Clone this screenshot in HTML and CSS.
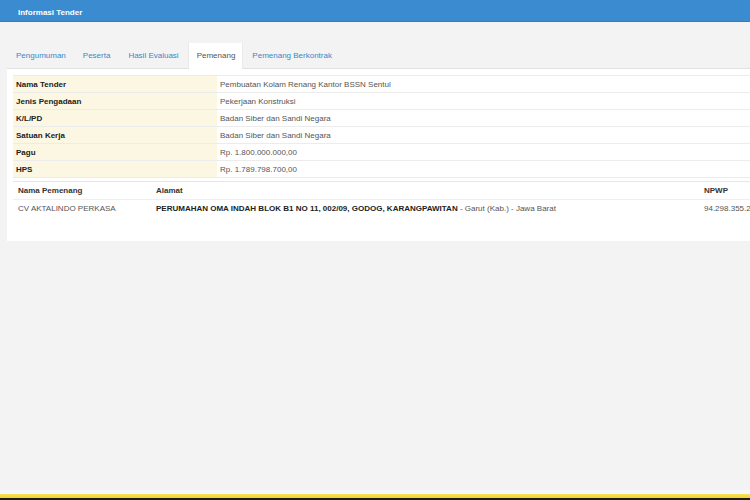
FILE: index.html
```html
<!DOCTYPE html>
<html lang="id">
<head>
<meta charset="utf-8">
<title>Informasi Tender</title>
<link rel="stylesheet" href="styles.css">
</head>
<body>
<div class="page">
  <div class="header">Informasi Tender</div>
  <div class="main">
    <ul class="tabs">
      <li class="tab">Pengumuman</li>
      <li class="tab">Peserta</li>
      <li class="tab">Hasil Evaluasi</li>
      <li class="tab active">Pemenang</li>
      <li class="tab">Pemenang Berkontrak</li>
    </ul>
    <div class="panel">
      <table class="info">
        <tr><th>Nama Tender</th><td>Pembuatan Kolam Renang Kantor BSSN Sentul</td></tr>
        <tr><th>Jenis Pengadaan</th><td>Pekerjaan Konstruksi</td></tr>
        <tr><th>K/L/PD</th><td>Badan Siber dan Sandi Negara</td></tr>
        <tr><th>Satuan Kerja</th><td>Badan Siber dan Sandi Negara</td></tr>
        <tr><th>Pagu</th><td>Rp. 1.800.000.000,00</td></tr>
        <tr><th>HPS</th><td>Rp. 1.789.798.700,00</td></tr>
      </table>
      <table class="winners">
        <colgroup><col class="c1"><col class="c2"><col class="c3"></colgroup>
        <tr><th>Nama Pemenang</th><th>Alamat</th><th>NPWP</th></tr>
        <tr>
          <td>CV AKTALINDO PERKASA</td>
          <td><b>PERUMAHAN OMA INDAH BLOK B1 NO 11, 002/09, GODOG, KARANGPAWITAN</b> - Garut (Kab.) - Jawa Barat</td>
          <td>94.298.355.2</td>
        </tr>
      </table>
    </div>
  </div>
  <div class="footer">
    <div class="f-light"></div>
    <div class="f-yellow"></div>
    <div class="f-dark"></div>
  </div>
</div>
</body>
</html>
```

FILE: styles.css
```css
html, body {
  margin: 0;
  padding: 0;
  overflow: hidden;
  background: #f3f3f3;
}
body {
  font-family: "Liberation Sans", Arial, sans-serif;
  font-size: 8px;
  color: #555;
}
.page {
  width: 900px;
  height: 500px;
  display: flex;
  flex-direction: column;
}
.header {
  height: 19px;
  padding-top: 2px;
  line-height: 22px;
  background: #3b8bd0;
  border-bottom: 1px solid #2f7cc0;
  color: #fff;
  font-weight: bold;
  padding-left: 18px;
}
.main {
  padding: 21px 0 0 7px;
}
.tabs {
  list-style: none;
  margin: 0;
  padding: 0;
  display: flex;
  border-bottom: 1px solid #e1e1e1;
  height: 25px;
}
.tab {
  padding: 0 9px;
  line-height: 25px;
  height: 25px;
  color: #3a87c9;
}
.tab:first-child {
  padding-right: 8px;
}
.tab.active {
  background: #fff;
  color: #555;
  height: 26px;
  padding: 0 7px 0 8px;
  border-left: 1px solid #eaeaea;
  border-right: 1px solid #eaeaea;
}
.panel {
  background: #fff;
  padding: 6px 6px 24px;
}
table {
  border-collapse: collapse;
  width: 100%;
}
.info th, .info td {
  height: 16px;
  padding: 0 3px;
  border-top: 1px solid #ececec;
  text-align: left;
  vertical-align: middle;
  white-space: nowrap;
}
.info tr:last-child th, .info tr:last-child td {
  border-bottom: 1px solid #ececec;
}
.info th {
  width: 198px;
  background: #fcf7e2;
  color: #222;
  font-weight: bold;
}
.info td {
  color: #555;
}
.winners {
  margin-top: 3px;
  table-layout: fixed;
}
.winners .c1 { width: 138px; }
.winners .c2 { width: 548px; }
.winners th, .winners td {
  padding: 0 5px;
  text-align: left;
  white-space: nowrap;
  overflow: hidden;
}
.winners th {
  height: 17px;
  border-top: 1px solid #e6e6e6;
  border-bottom: 1px solid #efefef;
  color: #333;
  font-weight: bold;
}
.winners td {
  height: 17px;
  color: #555;
}
.winners td b {
  color: #222;
}
.footer {
  margin-top: auto;
}
.f-light {
  height: 4px;
  background: #f8f8fb;
}
.f-yellow {
  height: 4px;
  background: linear-gradient(#f7e25a, #f2d230);
}
.f-dark {
  height: 2px;
  background: #1f1b10;
}
```
